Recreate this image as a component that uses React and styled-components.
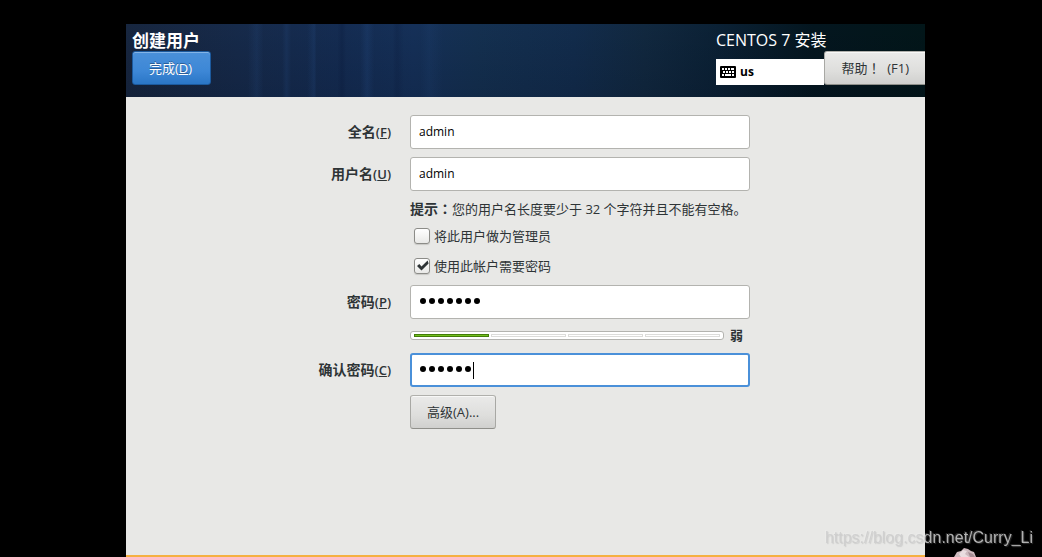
import React from "react";
import styled, { createGlobalStyle } from "styled-components";

const GlobalStyle = createGlobalStyle`
  *, *::before, *::after { box-sizing: border-box; }
  body {
    margin: 0;
    background: #000;
    color: #2e3436;
    font: 13px/20px "Open Sans", "Noto Sans CJK SC", sans-serif;
  }
  button, input { font: inherit; }
`;

const Screen = styled.div`
  display: flex;
  min-height: 100vh;
  padding: 24px 117px 0 126px;
  overflow: hidden;
`;

const Installer = styled.main`
  flex: 1;
  display: flex;
  flex-direction: column;
  background: #e8e8e6;
  border-bottom: 2px solid #f5b041;
`;

const Header = styled.header`
  display: flex;
  justify-content: space-between;
  height: 73px;
  padding-left: 6px;
  color: #fff;
  background:
    linear-gradient(90deg, transparent 0 5%, rgba(50, 100, 170, 0.12) 9%, transparent 12% 20%, rgba(50, 100, 170, 0.12) 22%, transparent 24% 31%, rgba(50, 100, 170, 0.14) 34%, transparent 35% 44%, rgba(0, 10, 40, 0.16) 46%, transparent 48% 54%, rgba(50, 100, 170, 0.14) 57%, transparent 60% 68%, rgba(0, 10, 40, 0.14) 70%, transparent 73% 80%, rgba(50, 100, 170, 0.08) 84%, transparent 90%) 110px 0 / 230px 100% no-repeat,
    linear-gradient(rgba(0, 0, 0, 0), rgba(0, 5, 20, 0.14)),
    linear-gradient(90deg, #17263f 0%, #162a4a 14%, #142c52 27%, #153058 36%, #143050 44%, #122c4c 56%, #11283f 65%, #0b2135 74%, #04161f 86%, #021619 100%);
`;

const TitleBlock = styled.div`
  display: flex;
  flex-direction: column;
  align-items: flex-start;
  padding-top: 6px;
`;

const Title = styled.h1`
  margin: 0;
  font-size: 17px;
  line-height: 21px;
  font-weight: 700;
`;

const Product = styled.h2`
  margin: 0;
  font-size: 16px;
  line-height: 21px;
  font-weight: 400;
`;

const StatusBlock = styled.div`
  width: 209px;
  padding-top: 6px;
`;

const StatusRow = styled.div`
  display: flex;
  align-items: flex-end;
`;

const Layout = styled.button`
  flex: 1;
  display: flex;
  align-items: center;
  gap: 4px;
  height: 26px;
  margin: 0;
  padding: 0 4px;
  border: 0;
  background: #fff;
  color: #000;
  font-size: 12px;
  font-weight: 700;
`;

const Button = styled.button`
  height: 34px;
  padding: 0 16px 1px;
  padding-right: ${(p) => (p.$primary ? "18px" : "16px")};
  border: 1px solid;
  border-color: ${(p) => (p.$primary ? "#1c5a9e" : "#b0b0ac #a8a8a4 #8f8f8a")};
  border-radius: ${(p) => (p.$flush ? "3px 0 0 3px" : "3px")};
  border-right-width: ${(p) => (p.$flush ? "0" : "1px")};
  background: ${(p) =>
    p.$primary
      ? "linear-gradient(#4a90d9, #3d87d6 60%, #2a76c6)"
      : "linear-gradient(#eaeae9, #dededc 60%, #d0d0ce)"};
  box-shadow: inset 0 1px ${(p) => (p.$primary ? "#83b4e7" : "#f8f8f7")};
  color: ${(p) => (p.$primary ? "#fff" : "#2e3436")};
  text-shadow: ${(p) => (p.$primary ? "0 -1px #2a5f9a" : "none")};
  white-space: pre;
`;

const Punctuation = styled.span`
  font-family: "Noto Sans CJK TC", sans-serif;
`;

const Form = styled.form`
  display: grid;
  grid-template-columns: 265fr 340px 156fr;
  column-gap: 19px;
  row-gap: 8px;
  align-items: center;
  padding-top: 18px;
`;

const Label = styled.label`
  grid-column: 1;
  justify-self: end;
  font-size: 14px;
  font-weight: 700;
`;

const Mnemonic = styled.span`
  font-size: 13px;
  font-weight: 600;
`;

const Cell = styled.div`
  grid-column: 2;
  display: flex;
  align-items: center;
`;

const Entry = styled.input`
  width: 100%;
  height: 34px;
  padding: 0 8px 2px;
  border: 1px solid #b3b3af;
  border-radius: 3px;
  outline: 0;
  background: #fff;
  color: #000;
  font-size: 12px;
`;

const PasswordBox = styled.div`
  position: relative;
  flex: 1;
  display: flex;
  align-items: center;
  height: 34px;
  padding: 0 ${(p) => (p.$focused ? "8px" : "9px")};
  border: ${(p) => (p.$focused ? "2px solid #4a90d9" : "1px solid #b3b3af")};
  border-radius: 3px;
  background: #fff;
`;

const HiddenEntry = styled.input`
  position: absolute;
  inset: 0;
  width: 100%;
  border: 0;
  opacity: 0;
`;

const Dots = styled.span`
  display: flex;
  gap: 3px;
  padding-bottom: 2px;
  i {
    width: 6px;
    height: 6px;
    border-radius: 50%;
    background: #000;
  }
`;

const Caret = styled.span`
  width: 1px;
  height: 17px;
  margin-left: 2px;
  background: #000;
`;

const Hint = styled.p`
  height: 19px;
  margin: 0;
  line-height: 18px;
  white-space: nowrap;
  b { font-size: 14px; }
`;

const Checks = styled.div`
  grid-column: 2;
  display: grid;
  gap: 10px;
  padding-bottom: 1px;
`;

const CheckLabel = styled.label`
  display: flex;
  align-items: center;
  gap: 4px;
  padding-left: 4px;
`;

const CheckFrame = styled.span`
  position: relative;
  display: flex;
  svg {
    position: absolute;
    inset: 0;
    pointer-events: none;
  }
`;

const Check = styled.input`
  appearance: none;
  width: 16px;
  height: 16px;
  margin: 0;
  border: 1px solid #8c8c88;
  border-radius: 3px;
  background: linear-gradient(#fff, #e9e9e7);
  box-shadow: 0 1px 1px #c8c8c5;
`;

const Strength = styled.div`
  grid-column: 2;
  display: flex;
  align-items: center;
  gap: 6px;
  height: 18px;
  padding-bottom: 2px;
  font-weight: 700;
`;

const Meter = styled.div`
  width: 314px;
  height: 9px;
  display: flex;
  gap: 2px;
  padding: 2px 3px;
  border: 1px solid #b3b3af;
  border-radius: 3px;
  background: #fff;
`;

const Segment = styled.span`
  flex: 1;
  border: 1px solid ${(p) => (p.$on ? "#437c09" : "#dcdcda")};
  background: ${(p) => (p.$on ? "#73c11e" : "#fff")};
`;

const Watermark = styled.a`
  position: fixed;
  right: 9px;
  bottom: 8px;
  color: rgba(205, 205, 205, 0.85);
  font: 16px/22px "Liberation Sans", sans-serif;
  text-decoration: none;
  text-shadow: 1px 1px 1px rgba(150, 150, 150, 0.3), -1px -1px rgba(255, 255, 255, 0.15);
`;

const Mascot = styled.svg`
  position: fixed;
  right: 65px;
  bottom: 0;
`;

function KeyboardIcon() {
  return (
    <svg width="16" height="12" viewBox="0 0 16 12" aria-hidden="true">
      <rect width="16" height="12" rx="1" fill="#000" />
      <g fill="#fff">
        {[2, 5, 8, 11].map((x) => <rect key={x} x={x} y="2" width="2" height="2" />)}
        <rect x="13" y="2" width="1" height="2" />
        {[3, 6, 9, 12].map((x) => <rect key={x} x={x} y="5" width="2" height="2" />)}
        <rect x="2" y="8" width="2" height="2" />
        <rect x="5" y="8" width="6" height="2" />
        <rect x="12" y="8" width="2" height="2" />
      </g>
    </svg>
  );
}

function CheckOption({ children, checked }) {
  return (
    <CheckLabel>
      <CheckFrame>
        <Check type="checkbox" defaultChecked={checked} />
        {checked && (
          <svg width="16" height="16" viewBox="0 0 16 16" aria-hidden="true">
            <path d="M3 8 5.3 6 7.5 8.4 13.6 2.6 14.6 5.4 7.5 12.6Z" fill="#2e3436" />
          </svg>
        )}
      </CheckFrame>
      {children}
    </CheckLabel>
  );
}

function FieldLabel({ htmlFor, text, mnemonic }) {
  return (
    <Label htmlFor={htmlFor}>
      {text}<Mnemonic>(<u>{mnemonic}</u>)</Mnemonic>
    </Label>
  );
}

function PasswordField({ id, count, focused }) {
  return (
    <PasswordBox $focused={focused}>
      <Dots aria-hidden="true">
        {Array.from({ length: count }, (_, i) => <i key={i} />)}
      </Dots>
      {focused && <Caret />}
      <HiddenEntry id={id} type="password" />
    </PasswordBox>
  );
}

export default function App() {
  return (
    <>
      <GlobalStyle />
      <Screen>
        <Installer>
          <Header>
            <TitleBlock>
              <Title>创建用户</Title>
              <Button type="button" $primary>完成(<u>D</u>)</Button>
            </TitleBlock>
            <StatusBlock>
              <Product>CENTOS 7 安装</Product>
              <StatusRow>
                <Layout type="button"><KeyboardIcon />us</Layout>
                <Button type="button" $flush>帮助<Punctuation>！</Punctuation>{"  (F1)"}</Button>
              </StatusRow>
            </StatusBlock>
          </Header>
          <Form>
            <FieldLabel htmlFor="fullname" text="全名" mnemonic="F" />
            <Cell><Entry id="fullname" defaultValue="admin" /></Cell>
            <FieldLabel htmlFor="username" text="用户名" mnemonic="U" />
            <Cell><Entry id="username" defaultValue="admin" /></Cell>
            <Cell>
              <Hint><b>提示<Punctuation>：</Punctuation></b>您的用户名长度要少于 32 个字符并且不能有空格。</Hint>
            </Cell>
            <Checks>
              <CheckOption>将此用户做为管理员</CheckOption>
              <CheckOption checked>使用此帐户需要密码</CheckOption>
            </Checks>
            <FieldLabel htmlFor="password" text="密码" mnemonic="P" />
            <Cell><PasswordField id="password" count={7} /></Cell>
            <Strength>
              <Meter>
                <Segment $on /><Segment /><Segment /><Segment />
              </Meter>
              弱
            </Strength>
            <FieldLabel htmlFor="confirm" text="确认密码" mnemonic="C" />
            <Cell><PasswordField id="confirm" count={6} focused /></Cell>
            <Cell><Button type="button">高级(A)...</Button></Cell>
          </Form>
        </Installer>
      </Screen>
      <Mascot width="24" height="9" viewBox="0 0 24 9" aria-hidden="true">
        <path d="M1 9 4 4 8 3 11 0 15 1 18 3 21 4 23 9Z" fill="#cdb9be" />
        <path d="M6 6 10 2 14 3 12 6 16 9H8Z" fill="#eadde0" />
        <path d="M15 4 20 6 22 9H17Z" fill="#a58d94" />
      </Mascot>
      <Watermark href="https://blog.csdn.net/Curry_Li">https://blog.csdn.net/Curry_Li</Watermark>
    </>
  );
}
